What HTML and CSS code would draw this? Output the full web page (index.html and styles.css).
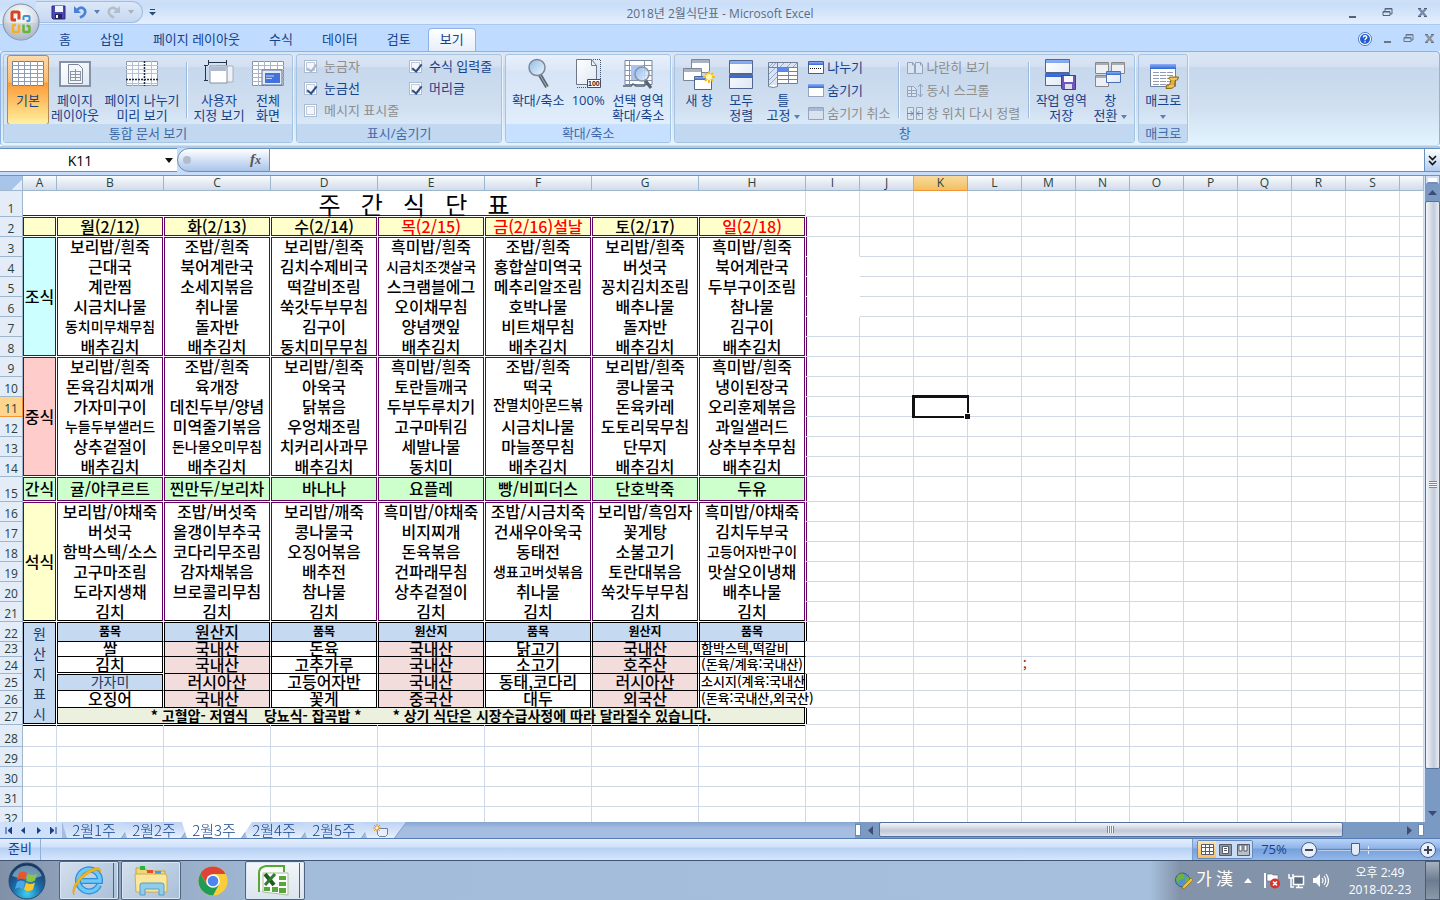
FILE: index.html
```html
<!DOCTYPE html>
<html lang="ko">
<head>
<meta charset="utf-8">
<title>2018년 2월식단표 - Microsoft Excel</title>
<link rel="stylesheet" href="styles.css">
</head>
<body>
<svg class="defs" aria-hidden="true">
  <defs>
    <linearGradient id="blueBar" x1="0" y1="0" x2="0" y2="1"><stop offset="0" stop-color="#8fb1f5"/><stop offset="1" stop-color="#2f66d6"/></linearGradient>
    <linearGradient id="paper" x1="0" y1="0" x2="1" y2="1"><stop offset="0" stop-color="#fff"/><stop offset="1" stop-color="#dfe7f4"/></linearGradient>
    <linearGradient id="lens" x1="0" y1="0" x2="1" y2="1"><stop offset="0" stop-color="#8fbce8"/><stop offset="1" stop-color="#eef6fd"/></linearGradient>
    <radialGradient id="orb" cx=".5" cy=".3" r=".7"><stop offset="0" stop-color="#fff"/><stop offset=".6" stop-color="#d8dde6"/><stop offset="1" stop-color="#9aa5b8"/></radialGradient>
    <radialGradient id="startOrb" cx=".5" cy=".85" r=".8"><stop offset="0" stop-color="#3fd0f4"/><stop offset=".5" stop-color="#1c6aa6"/><stop offset="1" stop-color="#16375f"/></radialGradient>
  </defs>
</svg>
<div class="app">
  <header class="titlebar">
    <div class="title-left">
      <div class="qat">
        <button aria-label="저장"><svg width="15" height="15" viewBox="0 0 15 15"><path d="M1 1h13v13H2l-1-1z" fill="#4b47b5" stroke="#2e2a80"/><path d="M4 1h8v6H4z" fill="#eef2fb"/><path d="M4 9h7v5H4z" fill="#222458"/><path d="M5 10h2v3H5z" fill="#fff"/></svg></button>
        <button aria-label="실행 취소"><svg width="14" height="14" viewBox="0 0 14 14"><path d="M4 5q4-4 7-1t-1 7l-3 1.500" fill="none" stroke="#4b80d8" stroke-width="2.600"/><path d="M1 1v7h7z" fill="#4b80d8"/></svg></button>
        <svg width="6" height="4" viewBox="0 0 6 4"><path d="M0 0h6L3 4z" fill="#5c7fb2"/></svg>
        <button aria-label="다시 실행"><svg width="14" height="14" viewBox="0 0 14 14"><path d="M10 5Q6 1 3 4t1 7l3 1.500" fill="none" stroke="#b4bdca" stroke-width="2.600"/><path d="M13 1v7H6z" fill="#b4bdca"/></svg></button>
        <svg width="6" height="4" viewBox="0 0 6 4"><path d="M0 0h6L3 4z" fill="#a9b1bf"/></svg>
      </div>
      <button class="qat-more" aria-label="빠른 실행 도구 모음 사용자 지정"><svg width="7" height="8" viewBox="0 0 7 8"><path d="M1 1.500h5" stroke="#234a80"/><path d="M0 4h7L3.500 7.500z" fill="#234a80"/></svg></button>
    </div>
    <h1>2018년 2월식단표 - Microsoft Excel</h1>
    <div class="win-buttons">
      <button aria-label="최소화"><svg width="11" height="11" viewBox="0 0 11 11"><path d="M2 10h7" stroke="#53627a" stroke-width="2"/></svg></button>
      <button aria-label="이전 크기로"><svg width="11" height="11" viewBox="0 0 11 11"><path d="M3 4V1.500h7V7H8M1 4.500h7v4H1z" fill="none" stroke="#53627a"/><path d="M3 2h7M1 5h7" stroke="#53627a"/></svg></button>
      <button aria-label="닫기"><svg width="11" height="11" viewBox="0 0 11 11"><path d="M2 1.500l7 8M9 1.500l-7 8" stroke="#7389a8" stroke-width="2.400"/><path d="M1 1.500h3M7 1.500h3M1 9.500h3M7 9.500h3" stroke="#53627a"/></svg></button>
    </div>
    <button class="office" aria-label="Office 단추"><svg width="38" height="38" viewBox="0 0 38 38"><circle cx="19" cy="19" r="18" fill="url(#orb)" stroke="#7d8ca5"/><path d="M2 20h34a17 17 0 0 1-34 0z" fill="#bcc5d3" opacity=".5"/><g fill="none"><path d="M17 16.500V10q0-1-1-1h-5q-1 0-1 1v6q0 1 1 1h3" stroke="#d8431c" stroke-width="3"/><path d="M21.500 17v-3q0-1 1-1h4q1 0 1 1v3q0 1-1 1h-2" stroke="#3c90dc" stroke-width="2"/><path d="M17 21.500V28q0 1-1 1h-4q-1 0-1-1v-5q0-1 1-1h2" stroke="#f5b02a" stroke-width="2.600"/><path d="M21.500 21.500V28q0 1 1 1h4q1 0 1-1v-4q0-1-1-1h-2" stroke="#6cb33c" stroke-width="2.600"/></g></svg></button>
  </header>

  <nav class="tabs">
    <button>홈</button><button>삽입</button><button>페이지 레이아웃</button><button>수식</button><button>데이터</button><button>검토</button><button class="active">보기</button>
    <div class="doc-buttons">
      <button aria-label="도움말"><svg width="14" height="14" viewBox="0 0 14 14"><circle cx="7" cy="7" r="6.500" fill="#fff" stroke="#4a77c0"/><circle cx="7" cy="7" r="5" fill="#1f5cd0"/><path d="M5.300 5.500C5.500 3 9 3.400 8.700 5.500 8.500 6.500 7 6.700 7 8.200M7 9.200v1.400" stroke="#fff" stroke-width="1.400" fill="none"/></svg></button>
      <button aria-label="창 최소화"><svg width="11" height="11" viewBox="0 0 11 11"><path d="M2 9h7" stroke="#6b7480" stroke-width="2"/></svg></button>
      <button aria-label="창 복원"><svg width="11" height="11" viewBox="0 0 11 11"><path d="M3 4V1.500h7V7H8M1 4.500h7v4H1z" fill="none" stroke="#6b7480"/><path d="M3 2h7M1 5h7" stroke="#6b7480"/></svg></button>
      <button aria-label="창 닫기"><svg width="11" height="11" viewBox="0 0 11 11"><path d="M2 1.500l7 8M9 1.500l-7 8" stroke="#8a929d" stroke-width="2.400"/><path d="M1 1.500h3M7 1.500h3M1 9.500h3M7 9.500h3" stroke="#6b7480"/></svg></button>
    </div>
  </nav>

  <section class="ribbon">
    <div class="group">
      <div class="tools">
        <button class="big w42 on"><svg width="32" height="32" viewBox="0 0 32 32"><path d="M.5 3.500h31v24H.500z" fill="#fff" stroke="#6d7f9c"/><path d="M0 7.500h32M0 11.500h32M0 15.500h32M0 19.500h32M0 23.500h32M6.500 3v25M12.500 3v25M18.500 3v25M25.500 3v25" stroke="#8e9db5"/></svg><span>기본</span></button>
        <button class="big w52"><svg width="32" height="32" viewBox="0 0 32 32"><path d="M1 4h30v24H1z" fill="url(#paper)" stroke="#8592a8" stroke-width="2"/><path d="M9.500 6.500h10l4 4v15h-14z" fill="#f5f7fb" stroke="#7b8696"/><path d="M11 13.500h10M11 16.500h10M11 19.500h10M11 22.500h10M11.500 13v10M16.500 11v12M21.500 13v10" stroke="#8b95a5"/></svg><span>페이지<br>레이아웃</span></button>
        <button class="big w82"><svg width="32" height="32" viewBox="0 0 32 32"><path d="M.5 3.500h31v24H.500z" fill="#fbfcfe" stroke="#8e9aaf"/><path d="M0 7.500h32M0 11.500h32M0 15.500h32M0 25.500h32M6.500 3v25M12.500 3v25M25.500 3v25" stroke="#b6c0d2"/><path d="M18.500 3v25M0 21.500h32" stroke="#1d2b45" stroke-width="1.500" stroke-dasharray="2 1"/></svg><span>페이지 나누기<br>미리 보기</span></button>
        <i class="sep"></i>
        <button class="big w56"><svg width="32" height="32" viewBox="0 0 32 32"><path d="M14 8h16v16H14z" fill="#eef1f6" stroke="#a8b0bd"/><path d="M7 8h17v17H7z" fill="#fff" stroke="#8490a3"/><path d="M8 9h15v4H8z" fill="#aebbd0"/><path d="M5.500 4.500h18M5.500 2v5M23.500 2v5M2.500 7v16M1 7.500h4M1 22.500h4" stroke="#24344f" fill="none"/></svg><span>사용자<br>지정 보기</span></button>
        <button class="big w42"><svg width="32" height="32" viewBox="0 0 32 32"><path d="M.5 3.500h31v24H.500z" fill="#fff" stroke="#8693aa"/><path d="M0 7.500h32M0 11.500h32M0 15.500h32M0 19.500h32M0 23.500h32M6.500 3v25M12.500 3v25M18.500 3v25M25.500 3v25" stroke="#aab5c8"/><path d="M10 12h20v15H10z" fill="#e4eaf6" stroke="#5c6f95"/><path d="M13 15h15v10H13z" fill="#4273dc"/><path d="M14 18h8M14 20.500h6" stroke="#c7d8fa"/></svg><span>전체<br>화면</span></button>
      </div>
      <h2>통합 문서 보기</h2>
    </div>
    <div class="group">
      <div class="tools checks">
        <label class="off"><input type="checkbox" checked disabled>눈금자</label>
        <label><input type="checkbox" checked>수식 입력줄</label>
        <label><input type="checkbox" checked>눈금선</label>
        <label><input type="checkbox" checked>머리글</label>
        <label class="off"><input type="checkbox" disabled>메시지 표시줄</label>
      </div>
      <h2>표시/숨기기</h2>
    </div>
    <div class="group lit">
      <div class="tools">
        <button class="big w60"><svg width="32" height="32" viewBox="0 0 32 32"><path d="M18 17l7 12" stroke="#5b6472" stroke-width="4"/><path d="M18 17l7 12" stroke="#a9b1bd" stroke-width="1"/><circle cx="15" cy="9.500" r="8" fill="url(#lens)" stroke="#7d8694" stroke-width="1.500"/></svg><span>확대/축소</span></button>
        <button class="big w40"><svg width="32" height="32" viewBox="0 0 32 32"><path d="M4.500 1.500h15l5 6v19h-20z" fill="url(#paper)" stroke="#6d7787"/><path d="M19.500 1.500v6h5" fill="none" stroke="#6d7787"/><path d="M21 1.500h7.500v28H4" fill="none" stroke="#44506a" stroke-dasharray="1 1"/><path d="M15.500 21.500h13v8h-13z" fill="#fff" stroke="#44506a"/><text x="16" y="28" font-family="Liberation Sans" font-weight="700" font-size="7" fill="#222">100</text></svg><span>100%</span></button>
        <button class="big w60"><svg width="32" height="32" viewBox="0 0 32 32"><path d="M3 2.500h27v24H3z" fill="#fff" stroke="#76859e"/><path d="M3 7.500h27M3 12.500h27M3 17.500h27M3 22.500h27M7.500 2v25M22.500 2v25" stroke="#8594ad"/><path d="M9 7h12v15H9z" fill="#a9c3f5"/><path d="M1 28h8l2-2 3 2h8l2-2 4 2" stroke="#5b6472" stroke-width="1.500" fill="none"/><path d="M23 22l6 8" stroke="#59616d" stroke-width="3"/><circle cx="20" cy="16" r="7" fill="url(#lens)" fill-opacity=".8" stroke="#8792a3" stroke-width="1.500"/></svg><span>선택 영역<br>확대/축소</span></button>
      </div>
      <h2>확대/축소</h2>
    </div>
    <div class="group">
      <div class="tools">
        <button class="big w42"><svg width="32" height="32" viewBox="0 0 32 32"><path d="M8.500 1.500h18v13h-18z" fill="#fff" stroke="#7b8797"/><path d="M9 2h17v3H9z" fill="#aab3c2"/><path d="M.5 10.500h18v12h-18z" fill="#fff" stroke="#7b8797"/><path d="M1 11h17v3H1z" fill="#aab3c2"/><path d="M11.500 18.500h17v13h-17z" fill="#fff" stroke="#51668c"/><path d="M12 19h16v3H12z" fill="url(#blueBar)"/><path d="M26 13v12M20 19h12M22 15l8 8M30 15l-8 8" stroke="#f4bf1b" stroke-width="2"/><circle cx="26" cy="19" r="3" fill="#fff8b0"/></svg><span>새 창</span></button>
        <button class="big w42"><svg width="32" height="32" viewBox="0 0 32 32"><path d="M4.500 2.500h23v13h-23zM4.500 16.500h23v14h-23z" fill="url(#paper)" stroke="#4e6690"/><path d="M5 3h22v3H5zM5 17h22v3H5z" fill="url(#blueBar)"/></svg><span>모두<br>정렬</span></button>
        <button class="big w42"><svg width="32" height="32" viewBox="0 0 32 32"><path d="M1.500 4.500h29v21h-20v3q-4 2-9 0z" fill="#fff" stroke="#6f7f98"/><path d="M2 5h28v4H2zM2 9h8v18H2z" fill="#dbe4f2"/><path d="M2 9l4-4M5 9l4-4M13 9l4-4M20 9l4-4M26 9l4-4M2 16l7-7M2 22l8-8M2 27l8-8" stroke="#93a7c9"/><path d="M11 9h10v4H11z" fill="#5d8af0"/><path d="M1 9.500h30M10.500 5v21M10 13.500h20M10 17.500h20M10 21.500h20M21.500 9v17" stroke="#75849d"/></svg><span>틀<br>고정 <b class="caret"></b></span></button>
        <div class="small">
          <button><svg width="16" height="13" viewBox="0 0 16 13"><path d="M.5.500h15v12H.500z" fill="#fff" stroke="#4a5f88"/><path d="M1 1h14v3H1z" fill="url(#blueBar)"/><path d="M2 7.500h12" stroke="#111" stroke-dasharray="1 1"/></svg>나누기</button>
          <button><svg width="16" height="13" viewBox="0 0 16 13"><path d="M.5.500h15v12H.500z" fill="#fff" stroke="#4a5f88" stroke-dasharray="1 1"/><path d="M0 0h16v4H0z" fill="url(#blueBar)"/></svg>숨기기</button>
          <button disabled><svg width="16" height="13" viewBox="0 0 16 13"><path d="M.5.500h15v12H.500z" fill="#d9e3f0" stroke="#94a5bf"/><path d="M1 1h14v3H1z" fill="#a8b9d3"/></svg>숨기기 취소</button>
        </div>
        <i class="sep"></i>
        <div class="small">
          <button disabled><svg width="16" height="13" viewBox="0 0 16 13"><path d="M.5 1.500h5l2 2v9h-7zM8.500 1.500h5l2 2v9h-7z" fill="#dbe5f2" stroke="#93a4bf"/><path d="M5.500 1v3h2M13.500 1v3h2" stroke="#93a4bf" fill="none"/></svg>나란히 보기</button>
          <button disabled><svg width="16" height="13" viewBox="0 0 16 13"><path d="M.5 2.500h6l3 3v7h-9z" fill="#dbe5f2" stroke="#93a4bf"/><path d="M1 6.500h8M1 9.500h8M4.500 3v9M13.500 0v13M11 3l2.500-3L16 3M11 10l2.500 3 2.500-3" stroke="#93a4bf" fill="none"/></svg>동시 스크롤</button>
          <button disabled><svg width="16" height="13" viewBox="0 0 16 13"><path d="M.5.500h6v12h-6zM9.500.500h6v12h-6z" fill="#dbe5f2" stroke="#93a4bf"/><path d="M0 6.500h6M3.500 4L6 6.500 3.500 9M16 6.500h-6M12.500 4L10 6.500l2.500 2.500" stroke="#6f83a3" fill="none"/></svg>창 위치 다시 정렬</button>
        </div>
        <i class="sep"></i>
        <button class="big w56"><svg width="32" height="32" viewBox="0 0 32 32"><path d="M.5 1.500h24v13H.500zM.5 15.500h24v12H.500z" fill="url(#paper)" stroke="#4e6690"/><path d="M1 2h23v3H1zM1 16h23v3H1z" fill="url(#blueBar)"/><path d="M16.500 17.500h14v14h-13l-1-1z" fill="#6e57b8" stroke="#4b3990"/><path d="M19 18h9v6h-9z" fill="#f7f7fb"/><path d="M20 26h7v5h-7z" fill="#dfe0ea"/></svg><span>작업 영역<br>저장</span></button>
        <button class="big w42"><svg width="32" height="32" viewBox="0 0 32 32"><path d="M1.500 4.500h13v11h-13zM17.500 4.500h13v11h-13zM1.500 17.500h13v11h-13z" fill="#eef0f4" stroke="#86888e"/><path d="M2 5h12v2H2zM18 5h12v2H18zM2 18h12v2H2z" fill="#aaacb2"/><path d="M12.500 13.500h14v11h-14z" fill="url(#paper)" stroke="#4b6fb5"/><path d="M13 14h13v3H13z" fill="url(#blueBar)"/></svg><span>창<br>전환 <b class="caret"></b></span></button>
      </div>
      <h2>창</h2>
    </div>
    <div class="group">
      <div class="tools">
        <button class="big w42"><svg width="32" height="32" viewBox="0 0 32 32"><path d="M3.500 6.500h25v22h-25z" fill="#fff" stroke="#7182a0"/><path d="M3 6h26v5H3z" fill="url(#blueBar)"/><path d="M6 14.500h20M6 17.500h20M6 20.500h20M6 23.500h20M6 26.500h16" stroke="#8c9cb8"/><path d="M12.500 12v15M19.500 12v15" stroke="#fff"/><path d="M21.500 20.500q.5-2 3-1.500h7l-1 3h-2l-1 5q-1 4-5 3.500h-3.500l.5-3.500h3l1.500-5z" fill="#e0b03c" stroke="#8a6612"/><path d="M23 21h7M22 28h5" stroke="#f8dc84" fill="none"/></svg><span>매크로<br><b class="caret"></b></span></button>
      </div>
      <h2>매크로</h2>
    </div>
  </section>

  <div class="formula">
    <input class="name" aria-label="이름 상자" value="K11">
    <button class="name-drop" aria-label="이름 목록"><b class="caret dark"></b></button>
    <button class="fx" aria-label="함수 삽입"><i></i><em>f<small>x</small></em></button>
    <input class="formula-input" aria-label="수식 입력줄">
    <button class="expand" aria-label="수식 입력줄 확장"><svg width="9" height="11" viewBox="0 0 9 11"><path d="M1 1l3.500 3.500L8 1M1 6l3.500 3.500L8 6" fill="none" stroke="#111" stroke-width="1.600"/></svg></button>
  </div>

  <main class="work">
    <div class="sheet"><table id="grid"></table></div>
    <div class="vscroll">
      <i class="split"></i>
      <button aria-label="위로"><svg width="9" height="5" viewBox="0 0 9 5"><path d="M0 5h9L4.500 0z" fill="#3d4c70"/></svg></button>
      <div class="track"><i class="thumb"></i></div>
      <button aria-label="아래로"><svg width="9" height="5" viewBox="0 0 9 5"><path d="M0 0h9L4.500 5z" fill="#3d4c70"/></svg></button>
    </div>
  </main>

  <div class="sheetbar">
    <div class="nav-arrows">
      <button aria-label="첫 시트"><svg width="7" height="7" viewBox="0 0 7 7"><path d="M1 0v7M7 0L3 3.500 7 7z" stroke="#1d3f87" fill="#1d3f87"/></svg></button>
      <button aria-label="이전 시트"><svg width="7" height="7" viewBox="0 0 7 7"><path d="M5 0L1 3.500 5 7z" fill="#1d3f87"/></svg></button>
      <button aria-label="다음 시트"><svg width="7" height="7" viewBox="0 0 7 7"><path d="M2 0l4 3.500L2 7z" fill="#1d3f87"/></svg></button>
      <button aria-label="마지막 시트"><svg width="7" height="7" viewBox="0 0 7 7"><path d="M6 0v7M0 0l4 3.500L0 7z" stroke="#1d3f87" fill="#1d3f87"/></svg></button>
    </div>
    <div class="sheet-tabs">
      <button>2월1주</button><button>2월2주</button><button class="active">2월3주</button><button>2월4주</button><button>2월5주</button>
      <button class="new" aria-label="워크시트 삽입"><svg width="16" height="13" viewBox="0 0 16 13"><path d="M4.500 4.500h10v6l-2 2h-6l-2-2z" fill="#e9eef8" stroke="#6b7fa5"/><path d="M4 0v8M0 4h8M1 1l6 6M7 1L1 7" stroke="#e0932b"/><circle cx="4" cy="4" r="1.500" fill="#fff3c2"/></svg></button>
    </div>
    <div class="hscroll">
      <i class="grip"></i>
      <button aria-label="왼쪽"><svg width="5" height="9" viewBox="0 0 5 9"><path d="M5 0v9L0 4.500z" fill="#3d4c70"/></svg></button>
      <div class="track"><i class="thumb"></i></div>
      <button aria-label="오른쪽"><svg width="5" height="9" viewBox="0 0 5 9"><path d="M0 0v9l5-4.500z" fill="#3d4c70"/></svg></button>
      <i class="grip"></i>
    </div>
  </div>

  <footer class="status">
    <span class="ready">준비</span>
    <div class="zoom">
      <div class="views">
        <button class="on" aria-label="기본"><svg width="13" height="11" viewBox="0 0 13 11"><path d="M.5.500h12v10H.500zM0 3.500h13M0 7.500h13M4.500 0v11M8.500 0v11" fill="#fff" stroke="#555d6b"/></svg></button>
        <button aria-label="페이지 레이아웃"><svg width="13" height="12" viewBox="0 0 13 12"><path d="M.5.500h12v11H.500z" fill="#8e96a3" stroke="#555d6b"/><path d="M3.500 2.500h6v7h-6z" fill="#fff" stroke="#555d6b"/><path d="M5 4.500h3M5 6.500h3" stroke="#555d6b"/></svg></button>
        <button aria-label="페이지 나누기 미리 보기"><svg width="13" height="12" viewBox="0 0 13 12"><path d="M.5.500h12v11H.500z" fill="#b9bfc9" stroke="#555d6b"/><path d="M2 1h3v6H2zM7 1h3v6H7z" fill="#fff" stroke="#555d6b"/></svg></button>
      </div>
      <button class="pct">75%</button>
      <button class="round" aria-label="축소"><svg width="16" height="16" viewBox="0 0 16 16"><circle cx="8" cy="8" r="7.500" fill="#e9f0fb" stroke="#44608f"/><path d="M4 8h8" stroke="#3c4658" stroke-width="2"/></svg></button>
      <div class="slider"><input type="range" aria-label="확대/축소" min="0" max="100" value="36"></div>
      <button class="round" aria-label="확대"><svg width="16" height="16" viewBox="0 0 16 16"><circle cx="8" cy="8" r="7.500" fill="#e9f0fb" stroke="#44608f"/><path d="M4 8h8M8 4v8" stroke="#3c4658" stroke-width="2"/></svg></button>
    </div>
  </footer>

  <div class="taskbar">
    <button class="start" aria-label="시작"><svg width="38" height="38" viewBox="0 0 38 38"><circle cx="19" cy="19" r="18" fill="url(#startOrb)" stroke="#2b4a70"/><path d="M4 14a16 16 0 0 1 30 0q-15 6-30 0z" fill="#b8cfe4" opacity=".55"/><path d="M11 11q4-3 8 0l-2 7q-4-3-8 0z" fill="#e8562a"/><path d="M20 11.500q4 3 9 0l-2 7q-5 3-9 0z" fill="#8cc63f"/><path d="M9 20q4-3 8 0l-2 7q-4-3-8 0z" fill="#4aa6e8"/><path d="M18 20.500q4 3 9 0l-2 7q-5 3-9 0z" fill="#fbc62c"/></svg></button>
    <button class="task stack" aria-label="Internet Explorer"><svg width="32" height="32" viewBox="0 0 32 32"><path d="M28 20a11 11 0 1 1 1-4H10" fill="none" stroke="#2b8fdc" stroke-width="6"/><path d="M28 20a11 11 0 1 1 1-4H10" fill="none" stroke="#6cc8f5" stroke-width="3.500"/><path d="M3 30C-2 24 10 6 24 3c5-1 7 1 5 5 0-3-2-4-6-2C12 10 2 22 3 30z" fill="#f2b619" stroke="#d8940c" stroke-width=".5"/></svg></button>
    <button class="task" aria-label="Windows 탐색기"><svg width="34" height="32" viewBox="0 0 34 32"><path d="M2 3h9l2 3h18v20H2z" fill="#f0d67c" stroke="#c8a13f"/><path d="M6 1h5v4H6z" fill="#2fb43c"/><path d="M13 5h6v3h-6z" fill="#e0502c"/><path d="M21 6h6v3h-6z" fill="#3d9ee0"/><path d="M1 9h31l1 3v15H2z" fill="#fae79c" stroke="#cfae50"/><path d="M6 30V20q0-2 2-2h20q2 0 2 2v10h-5v-6H11v6z" fill="#8fcdea" stroke="#5b9dc4"/></svg></button>
    <button class="task bare" aria-label="Chrome"><svg width="30" height="30" viewBox="0 0 30 30"><circle cx="15" cy="15" r="14.500" fill="#fbcd3b"/><path d="M2.400 7.800A14.500 14.500 0 0 0 15 29.500l6-11-12 0z" fill="#1f9d57"/><path d="M2.400 7.800A14.500 14.500 0 0 1 27.600 8H15L9 18z" fill="#dd4436"/><circle cx="15" cy="15" r="6.800" fill="#fff"/><circle cx="15" cy="15" r="5.300" fill="#4a86ee"/></svg></button>
    <button class="task stack lit" aria-label="Excel"><svg width="32" height="32" viewBox="0 0 32 32"><path d="M2 27V8q0-6 7-7h18v6" fill="#f6fbf3" stroke="#57a639" stroke-width="2"/><path d="M6 8h25v22L6 27z" fill="#fff" stroke="#a9bda0"/><path d="M22 11h7v4h-7zM22 17h7v4h-7zM7 22h6v4H7zM15 22h6v5h-6zM22 23h7v5h-7z" fill="#57a639"/><path d="M8 9l9 11" stroke="#1f5c22" stroke-width="4"/><path d="M18 9L8 20" stroke="#2e7a31" stroke-width="3"/></svg></button>
    <div class="tray">
      <svg width="18" height="18" viewBox="0 0 18 18"><circle cx="7.500" cy="8" r="7" fill="#4f93cd" stroke="#375f80"/><path d="M3 3q4-3 6 0t-2 4-3 5Q1 9 1 7zM10 6l4-1v4l-3 3z" fill="#6fb33f"/><path d="M16 6l2 2-8 8-3 1 1-3z" fill="#f3c03c" stroke="#8c6414" stroke-width=".6"/></svg>
      <span class="ime">가 漢</span>
      <svg class="up" width="8" height="5" viewBox="0 0 8 5"><path d="M0 5h8L4 0z" fill="#fff"/></svg>
      <svg width="18" height="17" viewBox="0 0 18 17"><path d="M2 1v15" stroke="#fff" stroke-width="2"/><path d="M4 2h5l1 1h5v7h-5L9 9H4z" fill="#fff" stroke="#5c6a7c" stroke-width=".6"/><circle cx="12" cy="11.500" r="5" fill="#d8332a"/><path d="M10 9.500l4 4M14 9.500l-4 4" stroke="#fff" stroke-width="1.500"/></svg>
      <svg width="17" height="16" viewBox="0 0 17 16"><path d="M5.500 3.500h10v8h-10z" fill="#5a6c83" stroke="#fff" stroke-width="1.500"/><path d="M8 14.500h7M10.500 12v2" stroke="#fff" stroke-width="1.500"/><path d="M1 1v4h4V1M3 5v9h3" stroke="#fff" fill="none" stroke-width="1.500"/></svg>
      <svg width="17" height="15" viewBox="0 0 17 15"><path d="M1 5h3l4-4v13l-4-4H1z" fill="#fff"/><path d="M10 5q2 2.500 0 5M12 3q3.500 4.500 0 9M14 1q5 6.500 0 13" fill="none" stroke="#fff" stroke-width="1.200"/></svg>
      <div class="clock"><span>오후 2:49</span><span>2018-02-23</span></div>
      <button class="desktop" aria-label="바탕 화면 보기"></button>
    </div>
  </div>
</div>
<script src="grid.js"></script>
</body>
</html>
```

FILE: grid.js
```js
const columns = 'ABCDEFGHIJKLMNOPQRST'.split('');
const LAST_ROW = 32;

const meals = {
  2: ['월(2/12)', '화(2/13)', '수(2/14)', '목(2/15)', '금(2/16)설날', '토(2/17)', '일(2/18)'],
  3: ['보리밥/흰죽', '조밥/흰죽', '보리밥/흰죽', '흑미밥/흰죽', '조밥/흰죽', '보리밥/흰죽', '흑미밥/흰죽'],
  4: ['근대국', '북어계란국', '김치수제비국', '시금치조갯살국', '홍합살미역국', '버섯국', '북어계란국'],
  5: ['계란찜', '소세지볶음', '떡갈비조림', '스크램블에그', '메추리알조림', '꽁치김치조림', '두부구이조림'],
  6: ['시금치나물', '취나물', '쑥갓두부무침', '오이채무침', '호박나물', '배추나물', '참나물'],
  7: ['동치미무채무침', '돌자반', '김구이', '양념깻잎', '비트채무침', '돌자반', '김구이'],
  8: ['배추김치', '배추김치', '동치미무무침', '배추김치', '배추김치', '배추김치', '배추김치'],
  9: ['보리밥/흰죽', '조밥/흰죽', '보리밥/흰죽', '흑미밥/흰죽', '조밥/흰죽', '보리밥/흰죽', '흑미밥/흰죽'],
  10: ['돈육김치찌개', '육개장', '아욱국', '토란들깨국', '떡국', '콩나물국', '냉이된장국'],
  11: ['가자미구이', '데친두부/양념', '닭볶음', '두부두루치기', '잔멸치아몬드볶음', '돈육카레', '오리훈제볶음'],
  12: ['누들두부샐러드', '미역줄기볶음', '우엉채조림', '고구마튀김', '시금치나물', '도토리묵무침', '과일샐러드'],
  13: ['상추겉절이', '돈나물오미무침', '치커리사과무', '세발나물', '마늘쫑무침', '단무지', '상추부추무침'],
  14: ['배추김치', '배추김치', '배추김치', '동치미', '배추김치', '배추김치', '배추김치'],
  15: ['귤/야쿠르트', '찐만두/보리차', '바나나', '요플레', '빵/비피더스', '단호박죽', '두유'],
  16: ['보리밥/야채죽', '조밥/버섯죽', '보리밥/깨죽', '흑미밥/야채죽', '조밥/시금치죽', '보리밥/흑임자', '흑미밥/야채죽'],
  17: ['버섯국', '올갱이부추국', '콩나물국', '비지찌개', '건새우아욱국', '꽃게탕', '김치두부국'],
  18: ['함박스텍/소스', '코다리무조림', '오징어볶음', '돈육볶음', '동태전', '소불고기', '고등어자반구이'],
  19: ['고구마조림', '감자채볶음', '배추전', '건파래무침', '생표고버섯볶음', '토란대볶음', '맛살오이냉채'],
  20: ['도라지생채', '브로콜리무침', '참나물', '상추겉절이', '취나물', '쑥갓두부무침', '배추나물'],
  21: ['김치', '김치', '김치', '김치', '김치', '김치', '김치'],
  22: ['품목', '원산지', '품목', '원산지', '품목', '원산지', '품목'],
  23: ['쌀', '국내산', '돈육', '국내산', '닭고기', '국내산', '함박스텍,떡갈비'],
  24: ['김치', '국내산', '고추가루', '국내산', '소고기', '호주산', '(돈육/계육:국내산)'],
  25: ['가자미', '러시아산', '고등어자반', '국내산', '동태,코다리', '러시아산', '소시지(계육:국내산'],
  26: ['오징어', '국내산', '꽃게', '중국산', '대두', '외국산', '(돈육:국내산,외국산)']
};

const labels = {
  2: { text: '', span: 1, cls: 'yellow' },
  3: { text: '조식', span: 6, cls: 'cyan' },
  9: { text: '중식', span: 6, cls: 'rose' },
  15: { text: '간식', span: 1, cls: 'green' },
  16: { text: '석식', span: 6, cls: 'yellow end' },
  22: { text: '원<br>산<br>지<br>표<br>시', span: 6, cls: 'blue black vertical' }
};

const tops = [2, 3, 9, 15, 16, 22];
const bottoms = [2, 8, 14, 15, 21];
const compact = ['B7', 'E4', 'B12', 'C13', 'H18', 'F19', 'F11'];

function cellClass(row, col, i) {
  const c = ['box'];
  if (tops.includes(row)) c.push('top');
  if (bottoms.includes(row)) c.push('bottom');
  else if (row < 22) c.push('joined');
  if (row === 2) c.push('yellow');
  if (row === 2 && (col === 'E' || col === 'F' || col === 'H')) c.push('red');
  if (row === 15) c.push('green');
  if (row === 21) c.push('end');
  if (compact.includes(col + row)) c.push('compact');
  if (row >= 22) {
    c.push('black');
    if (row === 22) c.push('blue', col === 'C' ? '' : 'caption');
    else if (i % 2) c.push('pink');
    if (col + row === 'B24') c.push('bottom');
    else c.push('ruled');
    if (col + row === 'B25') c.push('blue', 'top', 'light');
    if (row > 22 && col === 'H') c.push('note');
    if (col + row === 'H26') c.push('open');
  }
  return c.join(' ');
}

function emptyClass(row, col) {
  const c = [];
  if (row === 28 && col < 'I') c.push('box', 'black', 'top', 'flat');
  if (col === 'I' && row > 1 && row < 28 && ![23, 24, 26].includes(row)) c.push('box', 'edge', row > 21 ? 'black' : '');
  if (col === 'I' && row > 2 && row < 7) c.push('no-bottom');
  if (col === 'I' && row > 3 && row < 7) c.push('no-right');
  return c.join(' ');
}

let html = '<colgroup><col class="c-head"><col class="c-a">' + '<col class="c-day">'.repeat(7) + '<col class="c-std">'.repeat(11) + '<col></colgroup>';
html += '<thead><tr><th class="corner"></th>' + columns.map(c => `<th scope="col"${c === 'K' ? ' class="sel"' : ''}>${c === 'T' ? '' : c}</th>`).join('') + '</tr></thead><tbody>';

for (let r = 1; r <= LAST_ROW; r++) {
  html += `<tr class="row-${r}"><th scope="row"${r === 11 ? ' class="sel"' : ''}>${r}</th>`;
  let start = 0;
  if (r === 1) {
    html += '<td colspan="8" class="title box bottom flat">주   간   식   단   표</td>';
    start = 8;
  } else if (r < 28) {
    const l = labels[r];
    if (l) html += `<td rowspan="${l.span}" class="box top bottom label ${l.cls}">${l.text}</td>`;
    if (r === 27) {
      html += '<td colspan="7" class="box black bottom olive footnote">* 고혈압- 저염식    당뇨식- 잡곡밥 *        * 상기 식단은 시장수급사정에 따라 달라질수 있습니다.</td>';
    } else {
      meals[r].forEach((t, i) => {
        const col = columns[i + 1];
        const body = col + r === 'F11' ? `<div class="wrap">${t}</div>` : t;
        html += `<td class="${cellClass(r, col, i)}">${body}</td>`;
      });
    }
    start = 8;
  }
  for (let i = start; i < columns.length; i++) {
    const id = columns[i] + r;
    const body = id === 'K11' ? '<i class="cursor"></i>' : id === 'M24' ? '<span class="stray">;</span>' : '';
    html += `<td class="${emptyClass(r, columns[i])}">${body}</td>`;
  }
  html += '</tr>';
}
document.getElementById('grid').innerHTML = html + '</tbody>';
```

FILE: styles.css
```css
* { box-sizing: border-box; }
body {
  margin: 0;
  font: 13px/15px "Open Sans", "Noto Sans CJK KR", sans-serif;
  color: #15428b;
  overflow: hidden;
}
button, input { font: inherit; color: inherit; }
button { border: 0; padding: 0; background: none; display: flex; align-items: center; justify-content: center; }
svg { flex: none; }
h1, h2 { margin: 0; font-weight: 400; }
.defs { position: absolute; width: 0; height: 0; }
.app { height: 100vh; display: flex; flex-direction: column; }
.app > * { flex: none; }

.caret { display: inline-block; border: 3px solid transparent; border-top: 4px solid #5b7fb5; border-bottom: 0; vertical-align: middle; }
.caret.dark { border-width: 5px 4px 0; border-top-color: #111; }

/* title bar */
.titlebar {
  position: relative;
  height: 25px;
  display: grid;
  grid-template-columns: 1fr auto 1fr;
  align-items: center;
  background: linear-gradient(#cfe0f7, #c9def8 20%, #e4effd);
  border-bottom: 1px solid #a9c9f2;
}
.title-left { display: flex; align-items: center; gap: 6px; }
.qat {
  height: 22px;
  display: flex;
  align-items: center;
  gap: 7px;
  margin-left: 36px;
  padding: 0 8px 0 15px;
  border: 1px solid #a3bde0;
  border-left: 0;
  border-radius: 0 12px 12px 0;
  background: linear-gradient(#dce8f8, #c5d8f1);
}
.titlebar h1 { font-size: 12px; color: #5d6b82; padding-top: 2px; }
.win-buttons { justify-self: end; display: flex; gap: 24px; padding-right: 12px; }
.office { position: absolute; left: 2px; top: 3px; z-index: 2; }

/* ribbon tabs */
.tabs { height: 26px; display: flex; align-items: flex-end; gap: 5px; padding-left: 47px; background: #bfdbff; }
.tabs > button { height: 23px; padding: 0 12px 1px; color: #15428b; }
.tabs > .active { background: linear-gradient(#fff, #e6effb); border: 1px solid #8db2e3; border-bottom: 0; border-radius: 4px 4px 0 0; padding: 0 11px 1px; }
.doc-buttons { display: flex; gap: 10px; align-items: center; height: 25px; margin-left: auto; padding-right: 5px; }

/* ribbon */
.ribbon {
  height: 95px;
  display: flex;
  gap: 3px;
  padding: 2px;
  border: 1px solid #8db2e3;
  border-radius: 4px;
  border-bottom-color: #a9f0f5;
  background: linear-gradient(#dbe6f4, #d5e1f2 14px, #c7d8ed 16px, #d0dff0 55px, #e3f4ff);
}
.group { display: flex; flex-direction: column; border: 1px solid #a5c3e2; border-radius: 3px; box-shadow: 1px 0 0 #eaf2fb; }
.group h2 { height: 18px; line-height: 18px; text-align: center; font-size: 13px; color: #3e6aaa; background: #c1d8f0; border-radius: 0 0 3px 3px; }
.tools { flex: 1; min-height: 0; display: flex; padding: 0 3px; }
.group.lit { background: linear-gradient(#e8f0fb, #dce8f8 15px, #d6e4f6 16px, #e4f0fc); }
.group.lit h2 { background: #c8e0ff; }
.group.lit .tools { padding: 0 2px; }
.big { flex-direction: column; justify-content: flex-start; gap: 3px; padding-top: 3px; height: 70px; text-align: center; white-space: nowrap; }
.big.on { background: linear-gradient(#fdd9ab, #fbbb6b 26px, #fc9b38 27px, #ffe08a 60px, #fff0a8); border: 1px solid #b08a55; border-radius: 3px; padding-top: 2px; }
.w40 { width: 40px; }
.w42 { width: 42px; }
.w52 { width: 52px; }
.w56 { width: 56px; }
.w60 { width: 60px; }
.w82 { width: 82px; }
.sep { width: 2px; height: 56px; margin: 7px 3px 0; background: #9ab9de; border-right: 1px solid #f2f7fd; }
.small { display: flex; flex-direction: column; gap: 8px; padding: 5px 5px 0 4px; }
.small button { justify-content: flex-start; gap: 3px; height: 15px; white-space: nowrap; }
.small button:disabled { color: #8d8d8d; }
.tools.checks { display: grid; grid-template-columns: 105px auto; grid-auto-rows: 15px; row-gap: 7px; padding: 4px 9px 0 7px; }
.checks label { display: flex; align-items: center; gap: 7px; white-space: nowrap; }
.checks .off { color: #8d8d8d; }
.checks input { appearance: none; position: relative; width: 13px; height: 13px; margin: 0; border: 1px solid #a9bcd6; background: #f3f6fa; box-shadow: inset 0 0 0 1px #fff, inset 0 0 0 2px #c4cad3; }
.checks input:checked::after { content: ""; position: absolute; left: 4px; top: 1px; width: 4px; height: 8px; border: solid #2d4f86; border-width: 0 2px 2px 0; transform: rotate(38deg); }
.checks .off input:checked::after { border-color: #a9b6c9; }

/* formula bar */
.formula { height: 30px; display: flex; padding-top: 2px; border-bottom: 1px solid #6f94c0; background: #c7dcf8; box-shadow: inset 0 2px #b6c9e2; }
.formula > * { height: 24px; border: solid #6690be; border-width: 1px 0; }
.name { width: 160px; background: #fff; color: #000; text-align: center; font-size: 14px; }
.name-drop { width: 17px; background: #fff; }
.fx { width: 93px; justify-content: space-between; padding: 0 8px 0 5px; border-left: 1px solid #6690be; border-right: 1px solid #6690be; border-radius: 12px 0 0 12px; background: linear-gradient(#fff, #a9c4ea); }
.fx i { width: 8px; height: 8px; border-radius: 50%; background: #b3bccb; }
.fx em { font: italic 700 15px/15px "Liberation Serif", serif; color: #555; }
.fx small { font-size: 12px; }
.formula-input { flex: 1; min-width: 0; background: #fff; }
.expand { width: 16px; border-left: 1px solid #6690be; background: linear-gradient(#fff, #b3cbee); }

/* worksheet */
.app > .work { flex: 1; min-height: 0; display: flex; }
.sheet { flex: 1; min-width: 0; overflow: hidden; background: #fff; font-family: "Noto Sans CJK KR", sans-serif; }
table { width: 100%; table-layout: fixed; border-collapse: separate; border-spacing: 0; color: #000; }
.c-head { width: 23px; }
.c-a { width: 34px; }
.c-day { width: 107px; }
.c-std { width: 54px; }
th, td { padding: 0; font-size: 16px; line-height: 12px; white-space: nowrap; text-align: center; vertical-align: middle; }
tbody tr { height: 20px; }
thead th { height: 15px; font: 12px/14px "Open Sans", sans-serif; color: #27413e; border-right: 1px solid #9eb6ce; border-bottom: 1px solid #9eb6ce; background: linear-gradient(#f9fcfd, #d3dbe9); }
thead .corner { background: linear-gradient(135deg, #a9c4e9 70%, #dfeafa 70%); }
thead .sel { background: linear-gradient(#f9d99f, #f1c15f); border-color: #f29536; }
tbody th { vertical-align: bottom; font: 12px/15px "Open Sans", sans-serif; color: #27413e; background: #e4ecf7; border-right: 1px solid #9eb6ce; border-bottom: 1px solid #9eb6ce; }
tbody .sel { background: #ffd58d; border-color: #f29536; }
tbody .row-1 { height: 26px; }
tbody .row-15 { height: 25px; }
tbody .row-23 { height: 15px; }
tbody .row-23 th { line-height: 14px; }
tbody .row-24, tbody .row-25, tbody .row-26, tbody .row-27 { height: 17px; }
tbody .row-28 { height: 22px; }
td { --l: 0px; --r: 0px; --t: 0px; --b: 0px; --line: #660066; --foot: var(--line); padding-bottom: 2px; border-right: 1px solid #d0d7e5; border-bottom: 1px solid #d0d7e5; font-weight: 500; }
.box {
  --l: 1px;
  --r: -1px;
  border-color: #fff;
  background-clip: padding-box;
  box-shadow: inset var(--l) 0 var(--line), inset var(--r) 0 var(--line), inset 0 var(--t) var(--line), inset 0 var(--b) var(--foot);
}
.top { --t: 1px; }
.bottom { --b: -1px; }
.joined { border-bottom: 0; padding-bottom: 3px; }
.black { --line: #000; }
.end { --foot: #000; }
.flat { --l: 0px; --r: 0px; border-right-color: #d0d7e5; }
.row-28 .flat { border-bottom-color: #d0d7e5; }
.edge { --r: 0px; border-color: #d0d7e5; }
.ruled { border-bottom-color: #000; }
.open { --r: 0px; }
.no-bottom { border-bottom-color: #fff; }
.no-right { border-right-color: #fff; }
.yellow { background-color: #ffffcc; }
.cyan { background-color: #ccffff; }
.rose { background-color: #ffcccc; }
.green { background-color: #ccffcc; }
.blue { background-color: #c5d9f1; }
.pink { background-color: #f2dddc; }
.olive { background-color: #ebf1de; }
.red { color: #f00; }
.title { font-size: 24px; line-height: 22px; white-space: pre; padding-bottom: 0; font-weight: 400; }
.compact { font-size: 14px; }
.caption { font-size: 12px; font-weight: 700; }
.light { font-size: 14px; font-weight: 400; color: #1f3864; }
.note { font-size: 13px; text-align: left; padding-left: 2px; }
.footnote { font-size: 14px; font-weight: 700; white-space: pre; }
.vertical { font-size: 14px; line-height: 20px; padding: 0; font-weight: 400; color: #1f3864; }
.wrap { height: 17px; margin: 0 2px; line-height: 14px; overflow: hidden; white-space: normal; word-break: break-all; }
td:has(.cursor) { position: relative; }
.cursor { position: absolute; inset: -2px; border: 3px solid #111; border-width: 3px 2px 2px 3px; }
.cursor::after { content: ""; position: absolute; right: -3px; bottom: -3px; width: 5px; height: 5px; background: #111; border: solid #fff; border-width: 1px 0 0 1px; }
.stray { display: block; text-align: left; padding-left: 1px; font-size: 12px; color: #8b2a1a; }

/* scroll bars */
.vscroll { width: 16px; display: flex; flex-direction: column; border-left: 1px solid #d7e4f5; background: #7a9ac4; }
.vscroll .split { height: 8px; margin: 0 1px; background: #fff; border: 2px solid #d3e1f3; border-bottom-color: #6f8fba; }
.vscroll button { height: 17px; }
.vscroll .track { flex: 1; }
.thumb { display: flex; background: linear-gradient(90deg, #f4f6fa, #c3cbd9 60%, #e9edf4); border: 1px solid #55709c; border-radius: 2px; }
.vscroll .thumb { height: 94%; align-items: center; justify-content: center; }
.vscroll .thumb::after { content: ""; width: 8px; height: 7px; background: repeating-linear-gradient(#7c879b 0 1px, #f3f5f9 1px 2px); }

/* sheet tabs */
.sheetbar { height: 17px; display: flex; background: linear-gradient(#87a6d3, #a4bde0 6px); border-bottom: 1px solid #557db5; }
.nav-arrows { width: 62px; display: flex; justify-content: space-around; align-items: center; padding: 0 1px; background: #cfe1fa; }
.sheet-tabs { display: flex; color: #15428b; font: 15px/16px "Noto Sans CJK KR", sans-serif; filter: drop-shadow(1px 0 #7f9fcb); }
.sheet-tabs button { width: 70px; margin-right: -10px; background: linear-gradient(#c3d8f5, #dbe8fa); clip-path: polygon(0 0, 100% 0, 59px 100%, 5px 100%); padding-right: 6px; font-weight: 300; }
.sheet-tabs button:nth-child(even) { background: linear-gradient(#bdd3f3, #e6effc); }
.sheet-tabs .active, .sheet-tabs button.active { background: #fff; z-index: 1; position: relative; }
.sheet-tabs .new { width: 44px; clip-path: polygon(0 0, 100% 0, 32px 100%, 5px 100%); }
.hscroll { width: 585px; display: flex; margin-left: auto; padding-right: 16px; background: #7a9ac4; }
.hscroll .grip { width: 6px; margin: 2px 0; background: #fff; border: 1px solid #6b88b4; }
.hscroll button { width: 18px; }
.hscroll .track { flex: 1; }
.hscroll .thumb { width: 89%; height: 15px; align-items: center; justify-content: center; background: linear-gradient(#f4f6fa, #bfc8d6 60%, #dfe4ec); }
.hscroll .thumb::after { content: ""; width: 7px; height: 7px; background: repeating-linear-gradient(90deg, #7c879b 0 1px, #f3f5f9 1px 2px); }

/* status bar */
.status { height: 22px; display: flex; justify-content: space-between; background: linear-gradient(#e5effd, #cfe0fa 8px, #b6d0f5 9px, #d6e6fc); border-bottom: 1px solid #3f5576; }
.ready { padding: 2px 8px; width: 41px; border-right: 1px solid #8fb0dd; white-space: nowrap; }
.zoom { display: flex; align-items: center; padding: 0 4px 0 4px; border-left: 1px solid #7b9dcb; background: linear-gradient(#b9d2f5, #8fb5ea 9px, #759fdc 10px, #93b8ea); }
.views { display: flex; border: 1px solid #6489bd; border-radius: 2px; }
.views button { width: 18px; height: 17px; background: #cbdcf4; }
.views .on { background: linear-gradient(#ffe2b0, #f7bf60); }
.pct { width: 42px; }
.round { margin: 0 1px 0 6px; }
.slider { width: 101px; display: flex; align-items: center; background: linear-gradient(#e8f1fd, #e8f1fd) 50px 50% / 1px 8px no-repeat; }
.slider + .round { margin: 0 0 0 1px; }
.slider input { appearance: none; width: 100%; height: 16px; margin: 0; background: linear-gradient(#44608f, #e8f1fd) 0 50% / 100% 2px no-repeat; }
.slider input::-webkit-slider-thumb { appearance: none; width: 9px; height: 13px; border: 1px solid #44608f; border-radius: 1px 1px 5px 5px; background: #e3ebf7; }

/* taskbar */
.taskbar { height: 39px; display: flex; background: linear-gradient(90deg, #7f90a7, #8d9fb8 55px, #a3bcd9 300px, #a6bfdc 1150px, #8393a9 1180px); }
.start { width: 54px; }
.task { width: 60px; height: 39px; margin-right: 2px; border: 1px solid #51647f; border-radius: 2px; box-shadow: inset 0 0 0 1px #dbe6f3; background: linear-gradient(135deg, #d3dfec, #a9bfd9); }
.start + .task { margin-left: 5px; }
.task.stack { width: 60px; padding-right: 5px; border-right: 1px solid #51647f; background: linear-gradient(#51647f, #51647f) right 4px top / 1px 100% no-repeat, linear-gradient(135deg, #d3dfec, #a9bfd9); }
.task.bare { border: 0; box-shadow: none; background: none; }
.task.lit { background: linear-gradient(#51647f, #51647f) right 4px top / 1px 100% no-repeat, linear-gradient(#f3f6fa, #dbe4ee); }
.tray { display: flex; align-items: center; margin-left: auto; gap: 7px; color: #fff; }
.ime { font-size: 17px; margin-left: -4px; padding-bottom: 4px; }
.tray .up { margin: 0 4px; }
.clock { width: 80px; display: flex; flex-direction: column; align-items: center; gap: 2px; margin: 0 -2px 0 4px; font-size: 12px; }
.desktop { width: 15px; height: 39px; border: 1px solid #4c5b70; background: linear-gradient(#a6b2c1, #6c7b8f 50%, #8c99aa); }
```
